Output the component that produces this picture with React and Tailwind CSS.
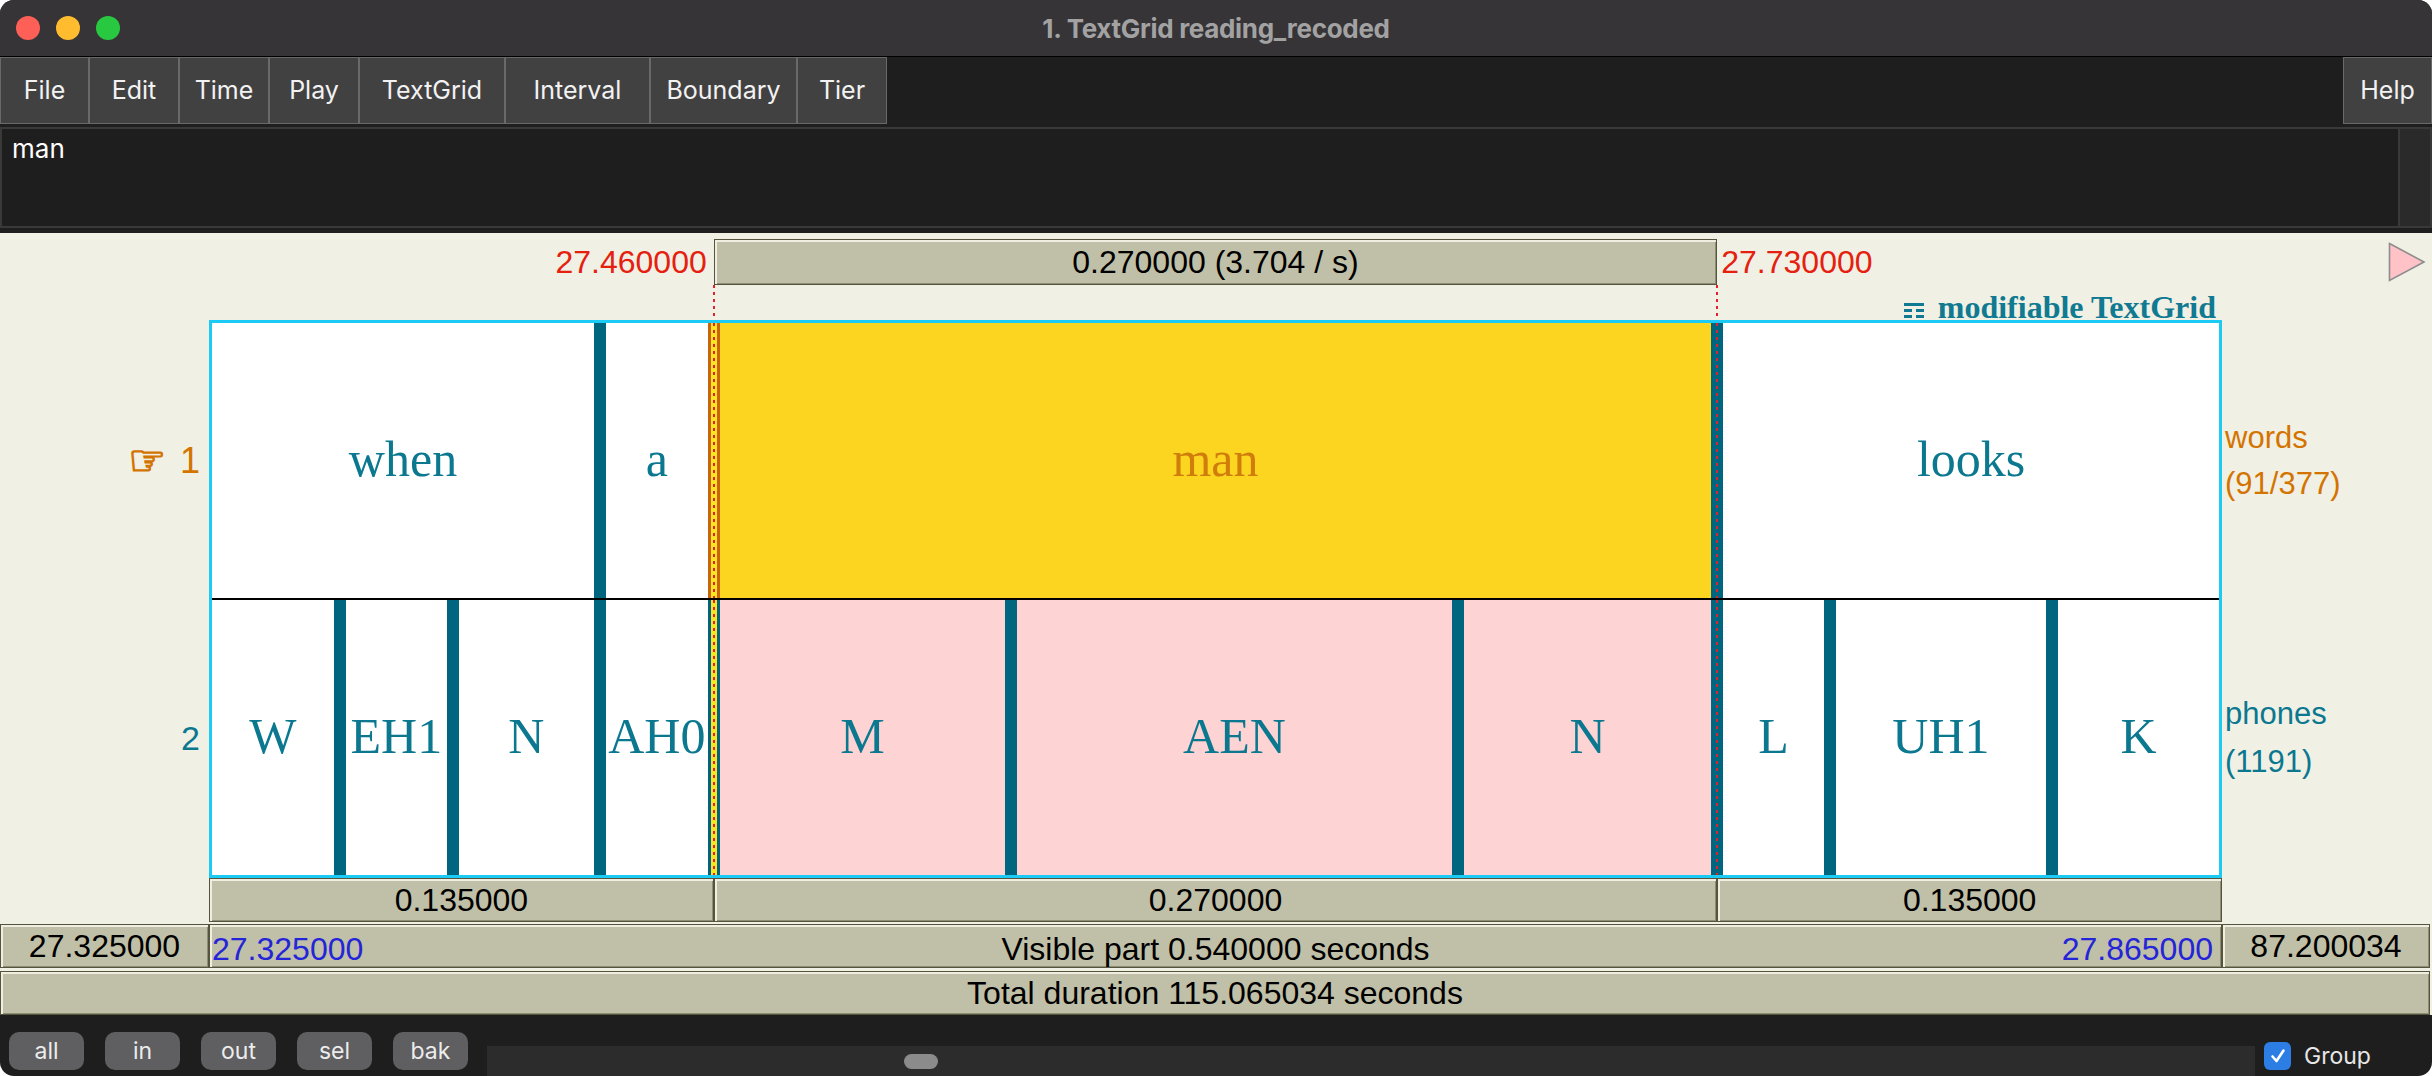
import React from "react";

// Visible window of the TextGrid editor (seconds) and the current selection.
const T0 = 27.325;
const T1 = 27.865;
const SEL0 = 27.46;
const SEL1 = 27.73;
const INNER = 2007; // inner width of the tier box in px
const PPS = INNER / (T1 - T0);
const span = (a, b) => (b - a) * PPS;

const words = [
  { a: T0, b: 27.4294, text: "when" },
  { a: 27.4294, b: SEL0, text: "a" },
  { a: SEL0, b: SEL1, text: "man", sel: true },
  { a: SEL1, b: T1, text: "looks" },
];

const phones = [
  { a: T0, b: 27.3594, text: "W" },
  { a: 27.3594, b: 27.3898, text: "EH1" },
  { a: 27.3898, b: 27.4294, text: "N" },
  { a: 27.4294, b: SEL0, text: "AH0" },
  { a: SEL0, b: 27.54, text: "M", sel: true },
  { a: 27.54, b: 27.6602, text: "AEN", sel: true },
  { a: 27.6602, b: SEL1, text: "N", sel: true },
  { a: SEL1, b: 27.7603, text: "L" },
  { a: 27.7603, b: 27.8201, text: "UH1" },
  { a: 27.8201, b: T1, text: "K" },
];

const menus = [
  { name: "File", w: "w-[89px]" },
  { name: "Edit", w: "w-[90px]" },
  { name: "Time", w: "w-[90px]" },
  { name: "Play", w: "w-[90px]" },
  { name: "TextGrid", w: "w-[146px]" },
  { name: "Interval", w: "w-[145px]" },
  { name: "Boundary", w: "w-[147px]" },
  { name: "Tier", w: "w-[90px]" },
];

const SANS = "font-['Liberation_Sans',Arial,sans-serif]";
const BEVEL =
  "bg-[#c0bfa7] border border-[#55553e] shadow-[inset_2px_2px_0_#efeee0,inset_-1px_-1px_0_#8e8d76]";

function RedDots() {
  return (
    <div className="w-[2px] h-full bg-[repeating-linear-gradient(to_bottom,#e3202c_0px,#e3202c_3px,transparent_3px,transparent_7px)]" />
  );
}

// Boundary bar between two intervals (12px wide)
function Boundary({ at, tier }) {
  if (at === SEL0) {
    return (
      <div
        className={
          tier === 1
            ? "w-[12px] shrink-0 h-full flex justify-center bg-[#c9640c]"
            : "w-[12px] shrink-0 h-full flex justify-center bg-[#00657f]"
        }
      >
        <div className="w-[6px] h-full flex justify-center bg-[#fbe326]">
          <RedDots />
        </div>
      </div>
    );
  }
  if (at === SEL1) {
    return (
      <div className="w-[12px] shrink-0 h-full flex justify-center bg-[#00657f]">
        <RedDots />
      </div>
    );
  }
  return <div className="w-[12px] shrink-0 h-full bg-[#00657f]" />;
}

function Tier({ items, tier }) {
  const out = [];
  items.forEach((it, i) => {
    const first = i === 0;
    const last = i === items.length - 1;
    const w = span(it.a, it.b) - (first ? 0 : 6) - (last ? 0 : 6);
    let bg = "bg-white";
    if (it.sel) bg = tier === 1 ? "bg-[#fcd520]" : "bg-[#fdd3d3]";
    out.push(
      <div
        key={"i" + i}
        style={{ width: w }}
        className={`shrink-0 h-full flex items-center justify-center overflow-visible ${bg}`}
      >
        <span
          className={
            tier === 1 && it.sel
              ? "font-['Liberation_Serif','Times_New_Roman',serif] text-[50px] leading-none whitespace-nowrap -mt-[3px] text-[#d07d0c]"
              : "font-['Liberation_Serif','Times_New_Roman',serif] text-[50px] leading-none whitespace-nowrap -mt-[3px] text-[#0b7890]"
          }
        >
          {it.text}
        </span>
      </div>
    );
    if (!last) out.push(<Boundary key={"b" + i} at={it.b} tier={tier} />);
  });
  return <div className="h-[275px] flex">{out}</div>;
}

function TrafficLights() {
  return (
    <div className="flex items-center gap-[16px] pl-[16px]">
      <div className="w-[24px] h-[24px] rounded-full bg-[#fe5f57]" />
      <div className="w-[24px] h-[24px] rounded-full bg-[#febc2e]" />
      <div className="w-[24px] h-[24px] rounded-full bg-[#28c840]" />
    </div>
  );
}

function GridIcon() {
  return (
    <svg width="20" height="15" viewBox="0 0 20 15" className="mr-[14px] mt-[12px]">
      <rect x="0" y="0" width="20" height="3" fill="#0f7a91" />
      <rect x="0" y="6" width="8" height="3" fill="#0f7a91" />
      <rect x="12" y="6" width="8" height="3" fill="#0f7a91" />
      <rect x="0" y="12" width="8" height="3" fill="#0f7a91" />
      <rect x="12" y="12" width="8" height="3" fill="#0f7a91" />
    </svg>
  );
}

export default function App() {
  const selLeft = 212 + span(T0, SEL0);
  const selWidth = span(SEL0, SEL1);

  return (
    <div className="w-[2432px] h-[1076px] bg-white overflow-hidden">
      <div className="w-full h-full rounded-[14px] overflow-hidden bg-[#1f1e1f] flex flex-col font-['Inter',sans-serif]">
        {/* Title bar */}
        <div className="h-[57px] shrink-0 bg-[#363436] border-b border-black grid grid-cols-[1fr_auto_1fr] items-center">
          <TrafficLights />
          <div className="text-[26px] font-bold text-[#a3a2a3] tracking-[-0.3px]">
            1. TextGrid reading_recoded
          </div>
          <div />
        </div>

        {/* Menu bar */}
        <div className="h-[67px] shrink-0 flex">
          {menus.map((m) => (
            <div
              key={m.name}
              className={`${m.w} h-full bg-[#424142] border border-[#6a696a] flex items-center justify-center text-[25px] text-[#f2f2f2]`}
            >
              {m.name}
            </div>
          ))}
          <div className="flex-1" />
          <div className="w-[89px] h-full bg-[#424142] border border-[#6a696a] flex items-center justify-center text-[25px] text-[#f2f2f2]">
            Help
          </div>
        </div>

        {/* Text field */}
        <div className="mt-[3px] h-[101px] shrink-0 border-2 border-[#3a393a] bg-[#1f1e1f] flex">
          <div className="flex-1 pl-[10px] pt-[2px] text-[26px] text-white leading-[36px]">man</div>
          <div className="w-[32px] h-full bg-[#2b2a2b] border-l-2 border-[#3a393a]" />
        </div>
        <div className="h-[5px] shrink-0" />

        {/* Drawing canvas */}
        <div className={`h-[782px] shrink-0 bg-[#f1f0e5] flex flex-col ${SANS}`}>
          {/* Selection header */}
          <div className="mt-[6px] h-[46px] flex items-center">
            <div style={{ width: selLeft }} className="flex justify-end pr-[7px] text-[32px] text-[#e5200f] leading-none">
              27.460000
            </div>
            <div style={{ width: selWidth }} className={`h-full flex items-center justify-center text-[32px] text-black leading-none ${BEVEL}`}>
              0.270000 (3.704 / s)
            </div>
            <div className="pl-[4px] text-[32px] text-[#e5200f] leading-none">27.730000</div>
            <div className="flex-1" />
            <svg width="38" height="40" viewBox="0 0 38 40" className="mr-[6px]">
              <path d="M1.5 1.5 L36 20 L1.5 38.5 Z" fill="#ffc3c7" stroke="#8d8d8d" strokeWidth="1.6" />
            </svg>
          </div>

          {/* Dotted selection markers and editor label */}
          <div className="h-[35px] flex">
            <div style={{ width: selLeft - 1 }} />
            <RedDots />
            <div style={{ width: selWidth - 2 }} />
            <RedDots />
            <div className="flex-1 flex justify-end items-start pr-[216px] pt-[6px]">
              <GridIcon />
              <span className="font-['Liberation_Serif','Times_New_Roman',serif] font-bold text-[32px] leading-none text-[#0f7a91]">
                modifiable TextGrid
              </span>
            </div>
          </div>

          {/* Tiers */}
          <div className="h-[558px] flex">
            <div className="w-[209px] flex flex-col pt-[3px]">
              <div className="h-[275px] flex items-center justify-end pr-[9px] gap-[14px] text-[#d47400]">
                <span className="font-['DejaVu_Sans',sans-serif] text-[42px] leading-none [-webkit-text-stroke:1.5px_#d47400]">☞</span>
                <span className="text-[36px] leading-none">1</span>
              </div>
              <div className="h-[2px]" />
              <div className="h-[275px] flex items-center justify-end pr-[9px] text-[34px] leading-none text-[#0b7890]">
                2
              </div>
            </div>
            <div className="w-[2013px] h-full border-[3px] border-[#1ccaf6] flex flex-col">
              <Tier items={words} tier={1} />
              <div className="h-[2px] bg-black" />
              <Tier items={phones} tier={2} />
            </div>
            <div className="flex-1 flex flex-col pt-[3px] pl-[3px] text-[31px]">
              <div className="h-[275px] flex flex-col justify-center leading-[46px] text-[#d47400]">
                <span>words</span>
                <span>(91/377)</span>
              </div>
              <div className="h-[2px]" />
              <div className="h-[275px] flex flex-col justify-center leading-[48px] text-[#0b7890]">
                <span>phones</span>
                <span>(1191)</span>
              </div>
            </div>
          </div>

          {/* Interval durations */}
          <div className="h-[44px] flex text-[32px] text-black">
            <div className="w-[209px]" />
            <div style={{ width: 3 + span(T0, SEL0) }} className={`flex items-center justify-center ${BEVEL}`}>
              0.135000
            </div>
            <div style={{ width: selWidth }} className={`flex items-center justify-center ${BEVEL}`}>
              0.270000
            </div>
            <div style={{ width: 3 + span(SEL1, T1) }} className={`flex items-center justify-center ${BEVEL}`}>
              0.135000
            </div>
          </div>

          {/* Visible part */}
          <div className="mt-[2px] h-[44px] flex text-[32px] text-black">
            <div className={`w-[209px] flex items-center justify-center ${BEVEL}`}>27.325000</div>
            <div className={`w-[2013px] grid grid-cols-[1fr_auto_1fr] items-center px-[2px] ${BEVEL}`}>
              <span className="text-[#2424d9]">27.325000</span>
              <span>Visible part 0.540000 seconds</span>
              <span className="text-right text-[#2424d9] pr-[6px]">27.865000</span>
            </div>
            <div className={`w-[208px] flex items-center justify-center ${BEVEL}`}>87.200034</div>
          </div>

          {/* Total duration */}
          <div className={`mt-[3px] h-[44px] w-[2430px] flex items-center justify-center text-[32px] text-black ${BEVEL}`}>
            Total duration 115.065034 seconds
          </div>
        </div>

        {/* Bottom controls */}
        <div className="flex-1 flex items-start pl-[9px]">
          <div className="mt-[17px] flex gap-[21px]">
            {["all", "in", "out", "sel", "bak"].map((b) => (
              <div
                key={b}
                className="w-[75px] h-[38px] rounded-[10px] bg-[#5f5e60] flex items-center justify-center text-[23px] text-[#ececec]"
              >
                {b}
              </div>
            ))}
          </div>
          <div className="ml-[19px] self-end w-[1768px] h-[30px] bg-[#2d2c2d] flex items-center pl-[417px]">
            <div className="w-[34px] h-[15px] rounded-full bg-[#8c8b8c]" />
          </div>
          <div className="ml-[9px] mt-[24px] flex items-center gap-[13px]">
            <div className="w-[27px] h-[28px] rounded-[6px] bg-[#2c7ee4] flex items-center justify-center">
              <svg width="18" height="18" viewBox="0 0 18 18">
                <path d="M3.5 9.5 L7.5 14 L14.5 3.5" fill="none" stroke="white" strokeWidth="2.6" strokeLinecap="round" strokeLinejoin="round" />
              </svg>
            </div>
            <span className="text-[23px] text-[#e6e6e6]">Group</span>
          </div>
        </div>
      </div>
    </div>
  );
}
